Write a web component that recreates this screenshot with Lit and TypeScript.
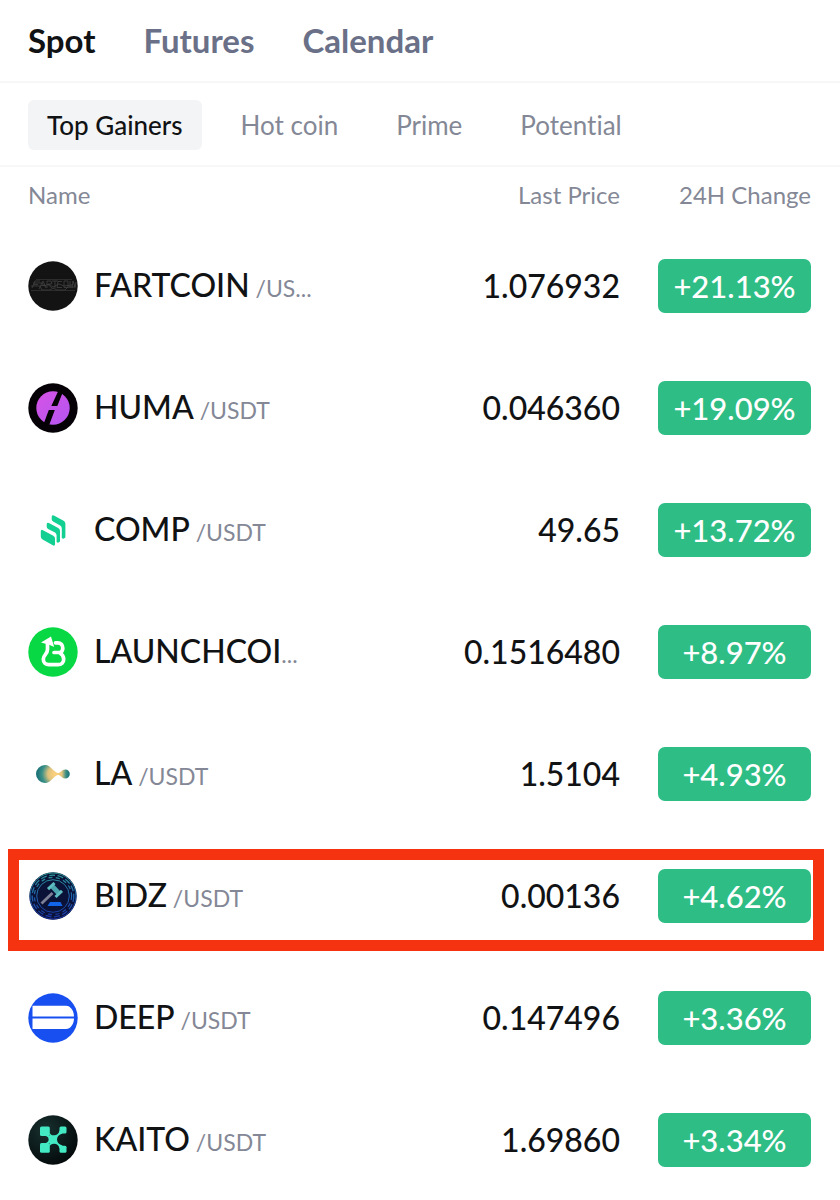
import { LitElement, html, css, svg } from "lit";
import { customElement, state } from "lit/decorators.js";
import { classMap } from "lit/directives/class-map.js";

const icon = (body: unknown) => html`<svg class="coin" viewBox="0 0 50 50" aria-hidden="true">${body}</svg>`;

const icons: Record<string, unknown> = {
  FARTCOIN: icon(svg`
    <circle cx="25" cy="25" r="24.7" fill="#131313"/>
    <g fill="none" stroke="#424242" stroke-width="0.8">
      <path d="M4 27l3-7h5M6 23.500h4M11 28l4-8 3 7M13 24.500h4M19 27v-7h4l1 2.500-4 1 4 3.500M24 20h6M27 20v7M34 20.500h-4l-1 6h5M36 20h4v6.500h-4zM42 20v7M44 27l1-7 2 6 1-5"/>
      <path d="M3 25h9l2 4h8l3-2 4 2h8l3-3h8M5 22h9l2 3 5-2 4 3 6-3 5 2 8-1"/>
      <path d="M3 29.500h44M8 18.500h36" stroke="#333"/>
    </g>`),
  HUMA: icon(svg`
    <defs><linearGradient id="huma" x1="0" y1="0" x2="1" y2="1"><stop offset="0" stop-color="#d653e6"/><stop offset="1" stop-color="#b455f0"/></linearGradient></defs>
    <circle cx="25" cy="25" r="24.700" fill="#050005"/>
    <circle cx="25" cy="25" r="16.700" fill="url(#huma)"/>
    <path d="M30.500 7.500h5L29.300 23h-6zM20.800 27h6L21 42.500h-6z" fill="#050005"/>`),
  COMP: icon(svg`
    <g fill="#14cf92">
      <path d="M12.800 26.500q0-2.400 2.200-1.300l10.300 5.500q1.700 1 1.700 2.900v5.400q0 2.400-2.200 1.300l-10.200-5.700q-1.800-1-1.800-3z"/>
      <path d="M18.700 19.500q0-2.600 2.200-1.400l9.300 5q1.800 1 1.800 3v10.500q-1.800 2-3.400.5v-6.600q0-2-1.600-2.900l-6.900-3.700q-1.400-.8-1.400-2z"/>
      <path d="M23.700 12q0-2.600 2.200-1.400l9.700 5.200q1.800 1 1.800 3v13.700q-1.900 2-3.600.5v-9.700q0-2-1.600-2.900l-7.100-3.800q-1.400-.8-1.400-2z"/>
    </g>`),
  LAUNCHCOIN: icon(svg`
    <circle cx="25" cy="25" r="24.700" fill="#07d843"/>
    <path d="M19.500 16.500v6c0 4.500-4.200 5.500-4.200 9.500 0 3.500 2.200 5.700 5.700 5.700h9c3.500 0 5.700-2.200 5.700-5.500 0-3-1.700-5-3.900-6.200 2-1 3-2.500 3-4.700 0-3.300-2-5.500-5-5.500H27.500M26 25.500h5" fill="none" stroke="#fff" stroke-width="3.700" stroke-linejoin="round" stroke-linecap="round"/>
    <path d="M13 15.500L23 9.500l3.200 10.500-5-2.200z" fill="#fff"/>`),
  LA: icon(svg`
    <defs>
      <radialGradient id="la1" gradientUnits="userSpaceOnUse" cx="27" cy="25" r="18"><stop offset=".1" stop-color="#f8cf7c"/><stop offset=".4" stop-color="#dcc27d"/><stop offset=".72" stop-color="#3b9188"/><stop offset="1" stop-color="#1b7277"/></radialGradient>
      <linearGradient id="la2"><stop offset="0" stop-color="#f8cf7c"/><stop offset=".35" stop-color="#e5c47c"/><stop offset=".7" stop-color="#358c85"/><stop offset="1" stop-color="#1b6f74"/></linearGradient>
    </defs>
    <path d="M17 16c6 0 7.500 6.500 13.500 8.300v1.400C24.500 27.500 23 34 17 34a9 9 0 0 1 0-18z" fill="url(#la1)"/>
    <path d="M29.500 24.200c3.500-.3 4-3.700 7.800-3.700a4.500 4.500 0 0 1 0 9c-3.800 0-4.300-3.400-7.800-3.700z" fill="url(#la2)"/>`),
  BIDZ: icon(svg`
    <defs><linearGradient id="bidz" gradientUnits="userSpaceOnUse" x1="0" y1="2" x2="0" y2="48"><stop offset="0" stop-color="#2b9a92"/><stop offset=".55" stop-color="#1e5fb0"/><stop offset="1" stop-color="#1a2fa0"/></linearGradient></defs>
    <circle cx="25" cy="25" r="23.700" fill="#0b1238"/>
    <g fill="none" stroke="url(#bidz)">
      <circle cx="25" cy="25" r="23" stroke-width="1"/>
      <circle cx="25" cy="25" r="20.800" stroke-width="1.300" stroke-dasharray="6 2.500"/>
      <circle cx="25" cy="25" r="18.600" stroke-width="1.200" stroke-dasharray="4 3.500"/>
      <circle cx="25" cy="25" r="16.300" stroke-width="1"/>
    </g>
    <path d="M13.500 32.500L24.500 22" stroke="#7d8095" stroke-width="2.800"/>
    <path d="M22.500 17l3.500-3.500L32.500 20.500 29 24z" fill="#4ba3ae"/>
    <path d="M20 18.200l6.500-6.200M27.500 26l6.500-6.200" stroke="#5cbcc0" stroke-width="3"/>
    <path d="M22 31h10.500l2 4H19.500z" fill="#1265e8"/>`),
  DEEP: icon(svg`
    <circle cx="25" cy="25" r="24.700" fill="#174ff0"/>
    <path d="M4.500 12.800H38c4.500 0 8 5 8 10.700H4.500zM4.500 25.500H46c0 5.500-3.500 10.500-8 10.500H4.500z" fill="#fff"/>`),
  KAITO: icon(svg`
    <defs><radialGradient id="kaito" cx=".35" cy=".3" r=".8"><stop offset="0" stop-color="#17302f"/><stop offset="1" stop-color="#030708"/></radialGradient></defs>
    <circle cx="25" cy="25" r="24.700" fill="url(#kaito)"/>
    <g fill="#42e9c3">
      <rect x="12" y="11.500" width="9.800" height="9.500" rx="1.500"/>
      <rect x="12" y="28" width="9.800" height="9.800" rx="1.500"/>
      <rect x="31.500" y="11.500" width="7" height="7" rx="1.500"/>
      <rect x="31.500" y="30.800" width="7" height="7" rx="1.500"/>
      <path d="M18 21h3.500V17.500c1 2.200 2 2.800 4.500 2.800 3 0 5-1.800 5.500-4.800l3 3c-3.500 1-5.500 3-5.500 6s2 5 5.500 6l-3 3c-.5-3-2.500-4.800-5.500-4.800-2.500 0-3.500.8-4.500 3V28H18c1.800-.8 2.600-1.700 2.600-3.500s-.8-2.700-2.600-3.500z"/>
    </g>`),
};

interface Coin { name: string; label?: string; quote?: string; price: string; change: string; marked?: boolean; }

const coins: Coin[] = [
  { name: "FARTCOIN", quote: " /US...", price: "1.076932", change: "+21.13%" },
  { name: "HUMA", price: "0.046360", change: "+19.09%" },
  { name: "COMP", price: "49.65", change: "+13.72%" },
  { name: "LAUNCHCOIN", label: "LAUNCHCOI", quote: "...", price: "0.1516480", change: "+8.97%" },
  { name: "LA", price: "1.5104", change: "+4.93%" },
  { name: "BIDZ", price: "0.00136", change: "+4.62%", marked: true },
  { name: "DEEP", price: "0.147496", change: "+3.36%" },
  { name: "KAITO", price: "1.69860", change: "+3.34%" },
];

@customElement("app-root")
export class AppRoot extends LitElement {
  @state() private market = "Spot";
  @state() private filter = "Top Gainers";

  static styles = css`
    :host {
      display: block;
      background: #fff;
      color: #111214;
      font-family: Lato, "Noto Sans", sans-serif;
      font-variant-ligatures: no-common-ligatures;
    }
    button {
      border: 0;
      padding: 0;
      background: none;
      font: inherit;
      color: inherit;
      cursor: pointer;
    }
    .markets {
      display: flex;
      gap: 48px;
      padding: 19px 28px 20px;
      border-bottom: 2px solid #f7f7f8;
      font-size: 33px;
      line-height: 42px;
      font-weight: 700;
      color: #6a7087;
    }
    .markets .active { color: #111214; }
    .filters {
      display: flex;
      gap: 20px;
      padding: 17px 28px 15px;
      border-bottom: 2px solid #f8f8f9;
      font-size: 26px;
      line-height: 50px;
      color: #848896;
    }
    .filters button {
      padding: 0 19px;
      border-radius: 6px;
    }
    .filters .active {
      background: #f3f4f6;
      color: #111214;
      font-weight: 500;
    }
    table {
      width: 100%;
      border-collapse: collapse;
      table-layout: fixed;
    }
    .col-price { width: 240px; }
    .col-change { width: 220px; }
    th {
      padding: 11px 0 13px;
      font-size: 24px;
      line-height: 34px;
      font-weight: 400;
      color: #848896;
      text-align: right;
    }
    td {
      height: 54px;
      padding: 34px 0;
      text-align: right;
    }
    tbody tr:last-child td { padding-bottom: 24px; }
    th:first-child, td:first-child { padding-left: 28px; text-align: left; }
    th:last-child, td:last-child { padding-right: 29px; }
    .name {
      display: flex;
      align-items: center;
      gap: 16px;
    }
    .coin {
      width: 50px;
      height: 50px;
      flex: none;
    }
    .pair {
      white-space: nowrap;
      font-size: 23px;
      line-height: 50px;
      color: #848896;
    }
    .base {
      font-size: 32px;
      font-weight: 500;
      color: #111214;
    }
    .price {
      font-size: 32px;
      line-height: 50px;
      font-weight: 500;
    }
    .pill {
      display: block;
      width: 153px;
      margin-left: auto;
      border-radius: 7px;
      background: #2ebd85;
      color: #fff;
      font-size: 31px;
      line-height: 54px;
      font-weight: 500;
      text-align: center;
    }
    .marked { position: relative; }
    .marked td:first-child::after {
      content: "";
      position: absolute;
      inset: 14px 16px 6px 8px;
      border: 11px solid #f53310;
      pointer-events: none;
    }
  `;

  private tabs(items: string[], current: string, pick: (item: string) => void) {
    return items.map((item) => html`<button
      class=${classMap({ active: item === current })}
      aria-pressed=${item === current}
      @click=${() => pick(item)}>${item}</button>`);
  }

  render() {
    return html`
      <nav class="markets">${this.tabs(["Spot", "Futures", "Calendar"], this.market, (m) => (this.market = m))}</nav>
      <div class="filters">${this.tabs(["Top Gainers", "Hot coin", "Prime", "Potential"], this.filter, (f) => (this.filter = f))}</div>
      <table>
        <colgroup><col /><col class="col-price" /><col class="col-change" /></colgroup>
        <thead>
          <tr><th scope="col">Name</th><th scope="col">Last Price</th><th scope="col">24H Change</th></tr>
        </thead>
        <tbody>
          ${coins.map((c) => html`
            <tr class=${classMap({ marked: !!c.marked })}>
              <td><div class="name">${icons[c.name]}<div class="pair"><span class="base">${c.label ?? c.name}</span>${c.quote ?? " /USDT"}</div></div></td>
              <td class="price">${c.price}</td>
              <td><span class="pill">${c.change}</span></td>
            </tr>`)}
        </tbody>
      </table>`;
  }
}
